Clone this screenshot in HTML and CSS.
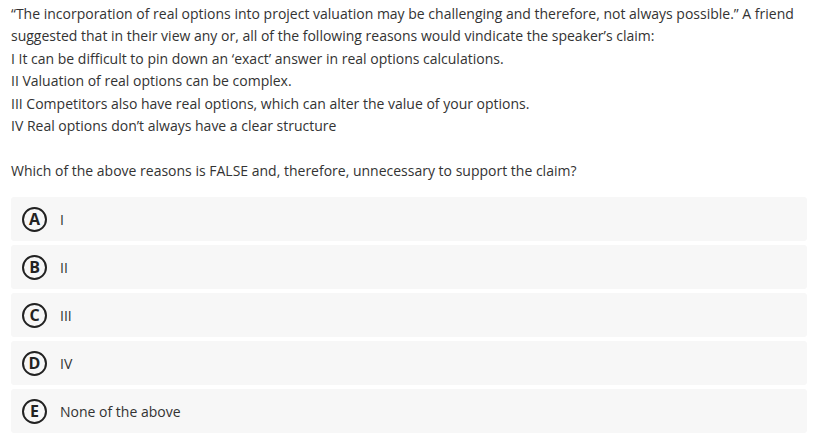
FILE: index.html
```html
<!DOCTYPE html>
<html>
<head>
<meta charset="utf-8">
<link rel="stylesheet" href="styles.css">
</head>
<body>
<div class="page">
  <div class="stem">
    <p>“The incorporation of real options into project valuation may be challenging and therefore, not always possible.” A friend suggested that in their view any or, all of the following reasons would vindicate the speaker’s claim:</p>
    <p>I It can be difficult to pin down an ‘exact’ answer in real options calculations.</p>
    <p>II Valuation of real options can be complex.</p>
    <p>III Competitors also have real options, which can alter the value of your options.</p>
    <p>IV Real options don’t always have a clear structure</p>
    <p class="blank">&nbsp;</p>
    <p>Which of the above reasons is FALSE and, therefore, unnecessary to support the claim?</p>
  </div>
  <div class="options">
    <div class="option"><span class="letter">A</span><span class="label">I</span></div>
    <div class="option"><span class="letter">B</span><span class="label">II</span></div>
    <div class="option"><span class="letter">C</span><span class="label">III</span></div>
    <div class="option"><span class="letter">D</span><span class="label">IV</span></div>
    <div class="option"><span class="letter">E</span><span class="label">None of the above</span></div>
  </div>
</div>
</body>
</html>
```
FILE: styles.css
```css
html, body {
  margin: 0;
  padding: 0;
  background: #ffffff;
}
.page {
  padding: 3px 15px 0 11px;
  font-family: "Open Sans", "Liberation Sans", sans-serif;
  font-size: 14px;
  color: #333333;
}
.stem p {
  margin: 0;
  line-height: 22.4px;
}
.options {
  margin-top: 15px;
  display: flex;
  flex-direction: column;
  gap: 4px;
}
.option {
  height: 44px;
  background: #f7f7f7;
  border-radius: 3px;
  display: flex;
  align-items: center;
  padding-left: 11px;
}
.letter {
  box-sizing: border-box;
  width: 25px;
  height: 25px;
  border: 2px solid #222222;
  border-radius: 50%;
  display: flex;
  align-items: center;
  justify-content: center;
  font-weight: 700;
  font-size: 16px;
  color: #222222;
  line-height: 1;
}
.label {
  margin-left: 13px;
}
```
